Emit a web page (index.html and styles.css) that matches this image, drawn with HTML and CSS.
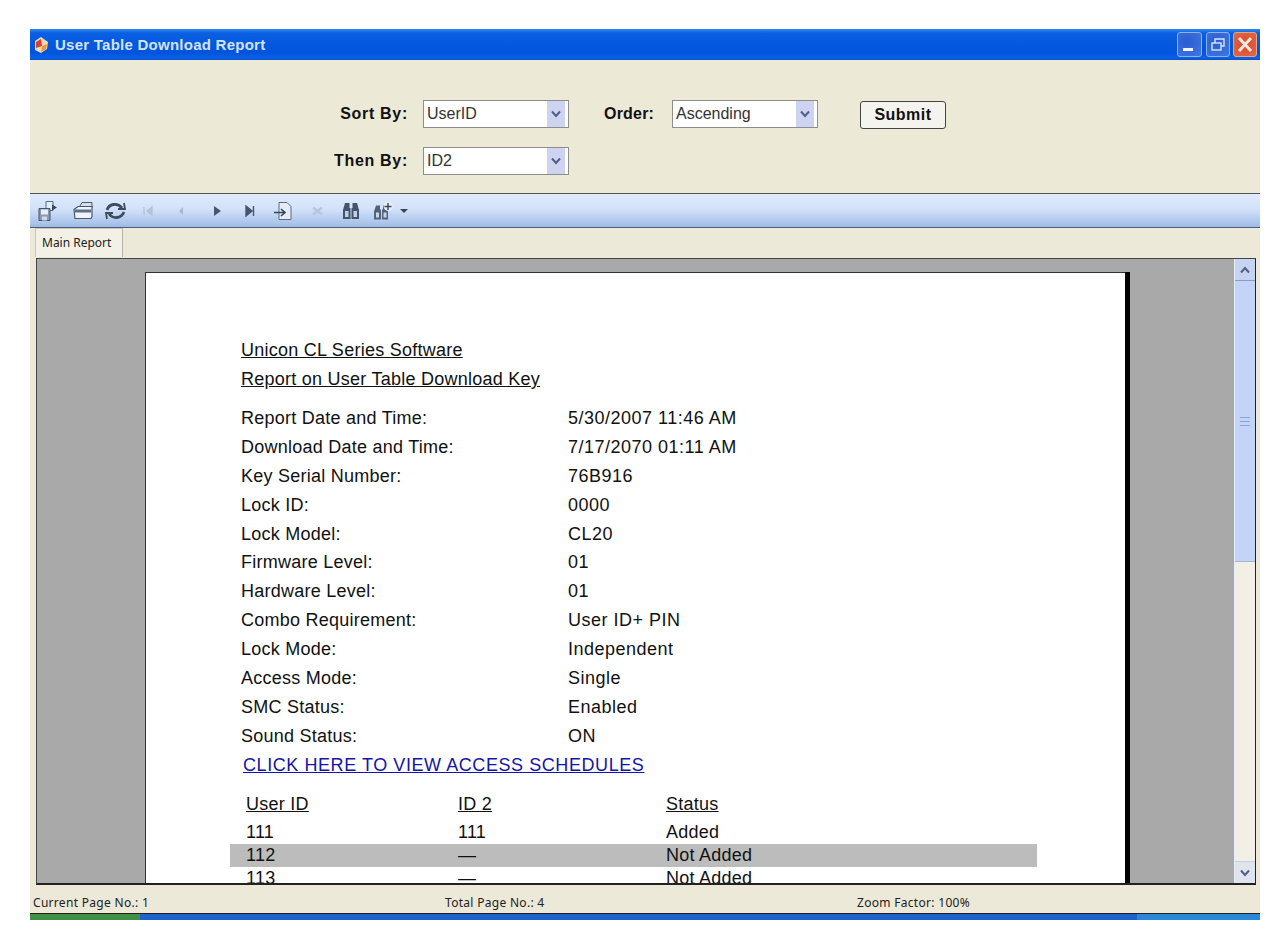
FILE: index.html
```html
<!DOCTYPE html>
<html lang="en">
<head>
  <meta charset="UTF-8">
  <title>User Table Download Report</title>
  <link rel="stylesheet" href="styles.css">
</head>
<body>
  <div class="window">
    <div class="title-bar">
      <svg class="app-icon" width="16" height="18" viewBox="0 0 16 18">
        <path d="M2 5 L8 1 L15 6 L14 13 L8 17 L2 14 Z" fill="#f3d9b8"/>
        <path d="M3 6 L8 3 L9 10 L3 12 Z" fill="#d6412a"/>
        <path d="M9 10 L14 8 L13 13 L8 16 Z" fill="#e79a3a"/>
      </svg>
      <span class="title-text">User Table Download Report</span>
      <div class="window-buttons">
        <div class="win-btn minimize">
          <svg width="25" height="25" viewBox="0 0 25 25"><rect x="6" y="16" width="10" height="3" fill="#f2f5fc"/></svg>
        </div>
        <div class="win-btn">
          <svg width="24" height="25" viewBox="0 0 24 25" fill="none" stroke="#dbe6fa" stroke-width="1.4"><rect x="6" y="11" width="9" height="7"/><path d="M9 11 V7 H18 V14 H15"/></svg>
        </div>
        <div class="win-btn close">
          <svg width="24" height="25" viewBox="0 0 24 25" fill="none" stroke="#fbe9df" stroke-width="3"><path d="M6 6 L18 19 M18 6 L6 19"/></svg>
        </div>
      </div>
    </div>

    <div class="sort-form">
      <div class="sort-row">
        <span class="sort-label">Sort By:</span>
        <div class="select-box"><span>UserID</span><i class="select-arrow"><svg width="10" height="8" viewBox="0 0 10 8" fill="none" stroke="#4f5f8a" stroke-width="2"><path d="M1 1.5 L5 6 L9 1.5"/></svg></i></div>
        <span class="order-label">Order:</span>
        <div class="select-box"><span>Ascending</span><i class="select-arrow"><svg width="10" height="8" viewBox="0 0 10 8" fill="none" stroke="#4f5f8a" stroke-width="2"><path d="M1 1.5 L5 6 L9 1.5"/></svg></i></div>
        <button class="submit-btn">Submit</button>
      </div>
      <div class="sort-row">
        <span class="sort-label">Then By:</span>
        <div class="select-box"><span>ID2</span><i class="select-arrow"><svg width="10" height="8" viewBox="0 0 10 8" fill="none" stroke="#4f5f8a" stroke-width="2"><path d="M1 1.5 L5 6 L9 1.5"/></svg></i></div>
      </div>
    </div>

    <div class="toolbar">
      <svg class="tool" style="left:8px" width="20" height="21" viewBox="0 0 20 21"><path d="M8 1 H15 V10 H8 Z" fill="#e4ecf8" stroke="#5a6a80"/><path d="M1 8 H12 V20 H1 Z" fill="#8a9ab0" stroke="#46546a"/><rect x="3" y="9" width="7" height="5" fill="#e8eef8"/><rect x="4" y="16" width="5" height="4" fill="#d0dae8"/><path d="M14 4 L19 7 L14 10 Z" fill="#36465a"/></svg>
      <svg class="tool" style="left:43px" width="20" height="19" viewBox="0 0 20 19"><path d="M6 6 L9 1 H19 V6" fill="#d4dfee" stroke="#4a5a70"/><path d="M1 8 L5 5 H19 V15 L18 17 H2 Z" fill="#f0f4fa" stroke="#46566c" stroke-width="1.2"/><rect x="2" y="8" width="16" height="3" fill="#5d7088"/></svg>
      <svg class="tool" style="left:75px" width="21" height="20" viewBox="0 0 21 20" fill="none" stroke="#3c4c5e" stroke-width="2.8"><path d="M2 9 C4 3 12 1 17 7"/><path d="M19 11 C16 18 8 18 4 13"/><path d="M13 8 L20 8 L19 2" stroke-width="1.8"/><path d="M8 12 L1 12 L2 18" stroke-width="1.8"/></svg>
      <svg class="tool" style="left:113px" width="10" height="12" viewBox="0 0 10 12"><path d="M1 2 V10 M9 2 L4 6 L9 10 Z" fill="#b4c2d6" stroke="#b4c2d6" stroke-width="1.4"/></svg>
      <svg class="tool" style="left:148px" width="6" height="12" viewBox="0 0 6 12"><path d="M5 2 L1 6 L5 10 Z" fill="#aab8cc"/></svg>
      <svg class="tool" style="left:183px" width="9" height="12" viewBox="0 0 9 12"><path d="M1 1 L8 6 L1 11 Z" fill="#465670"/></svg>
      <svg class="tool" style="left:215px" width="10" height="12" viewBox="0 0 10 12"><path d="M1 1 L7 6 L1 11 Z M8.5 1 V11" fill="#465670" stroke="#465670" stroke-width="1.4"/></svg>
      <svg class="tool" style="left:243px" width="20" height="19" viewBox="0 0 20 19"><path d="M6 1 H14 L18 5 V18 H6 Z" fill="#e4ecf8" stroke="#5a6a80"/><path d="M1 11 H12 M8 7.5 L12 11 L8 14.5" fill="none" stroke="#36465a" stroke-width="1.6"/></svg>
      <svg class="tool" style="left:282px" width="11" height="9" viewBox="0 0 11 9"><path d="M1 1 L10 8 M10 1 L1 8" stroke="#b6c6dc" stroke-width="2.4"/></svg>
      <svg class="tool" style="left:312px" width="18" height="18" viewBox="0 0 18 18"><path d="M3 1 H7.5 V6 H8.5 V17 H1 V8 Z M10.5 1 H15 L17 8 V17 H9.5 V6 H10.5 Z" fill="#44546c"/><rect x="3" y="9" width="3.5" height="6" fill="#c0d0e6"/><rect x="11.5" y="9" width="3.5" height="6" fill="#c0d0e6"/></svg>
      <svg class="tool" style="left:343px" width="20" height="19" viewBox="0 0 20 19"><path d="M3 4 H7 V8 H8 V18 H1 V10 Z M10 4 H13 L15 10 V18 H9 V8 H10 Z" fill="#52627a"/><rect x="3" y="11" width="3" height="5" fill="#c8d6ea"/><rect x="10.5" y="11" width="3" height="5" fill="#c8d6ea"/><circle cx="15" cy="5" r="4.4" fill="#e8eff9"/><path d="M15 1.5 V8.5 M11.5 5 H18.5" stroke="#36465a" stroke-width="1.4"/></svg>
      <svg class="tool" style="left:370px" width="8" height="4" viewBox="0 0 8 4"><path d="M0 0 H8 L4 4 Z" fill="#36465a"/></svg>
    </div>

    <div class="tab-row">
      <div class="tab">Main Report</div>
    </div>

    <div class="viewer">
      <div class="report-scroll">
        <div class="report-page">
          <div class="report-head"><u>Unicon CL Series Software</u></div>
          <div class="report-head second"><u>Report on User Table Download Key</u></div>
          <div class="report-fields">
            <div class="field"><span>Report Date and Time:</span><span>5/30/2007 11:46 AM</span></div>
            <div class="field"><span>Download Date and Time:</span><span>7/17/2070 01:11 AM</span></div>
            <div class="field"><span>Key Serial Number:</span><span>76B916</span></div>
            <div class="field"><span>Lock ID:</span><span>0000</span></div>
            <div class="field"><span>Lock Model:</span><span>CL20</span></div>
            <div class="field"><span>Firmware Level:</span><span>01</span></div>
            <div class="field"><span>Hardware Level:</span><span>01</span></div>
            <div class="field"><span>Combo Requirement:</span><span>User ID+ PIN</span></div>
            <div class="field"><span>Lock Mode:</span><span>Independent</span></div>
            <div class="field"><span>Access Mode:</span><span>Single</span></div>
            <div class="field"><span>SMC Status:</span><span>Enabled</span></div>
            <div class="field"><span>Sound Status:</span><span>ON</span></div>
          </div>
          <a class="schedule-link" href="#">CLICK HERE TO VIEW ACCESS SCHEDULES</a>
          <div class="user-row user-head"><span><u>User ID</u></span><span><u>ID 2</u></span><span><u>Status</u></span></div>
          <div class="user-row"><span>111</span><span>111</span><span>Added</span></div>
          <div class="user-row shaded"><span>112</span><span>&mdash;</span><span>Not Added</span></div>
          <div class="user-row"><span>113</span><span>&mdash;</span><span>Not Added</span></div>
        </div>
      </div>
      <div class="scrollbar">
        <div class="scroll-btn"><svg width="10" height="8" viewBox="0 0 10 8" fill="none" stroke="#4f5f8a" stroke-width="2"><path d="M1 6.5 L5 2 L9 6.5"/></svg></div>
        <div class="scroll-thumb"><span class="grip"></span></div>
        <div class="scroll-track"></div>
        <div class="scroll-btn bottom"><svg width="10" height="8" viewBox="0 0 10 8" fill="none" stroke="#4f5f8a" stroke-width="2"><path d="M1 1.5 L5 6 L9 1.5"/></svg></div>
      </div>
    </div>

    <div class="status-bar">
      <span class="status-current">Current Page No.: 1</span>
      <span class="status-total">Total Page No.: 4</span>
      <span class="status-zoom">Zoom Factor: 100%</span>
    </div>
    <div class="task-strip"><div class="task-start"></div></div>
  </div>
</body>
</html>
```

FILE: styles.css
```css
body {
  margin: 0;
  background: #fff;
  font-family: "Liberation Sans", Arial, sans-serif;
  color: #111;
}

.window {
  width: 1230px;
  height: 891px;
  margin: 29px 0 0 30px;
  display: flex;
  flex-direction: column;
  background: #ece9d8;
}

.title-bar {
  height: 31px;
  display: flex;
  align-items: center;
  background: linear-gradient(#2f8cf0 0, #0a5fe2 4px, #0054dc 24px, #0a62e8 29px, #0a4fc0 31px);
}

.app-icon {
  margin-left: 3px;
}

.title-text {
  margin-left: 6px;
  font-weight: bold;
  font-size: 15px;
  letter-spacing: 0.25px;
  color: #d5e2f8;
}

.window-buttons {
  margin-left: auto;
  margin-right: 3px;
  display: flex;
  gap: 3px;
}

.win-btn {
  width: 24px;
  height: 25px;
  border: 1px solid #8fb0ea;
  border-radius: 3px;
  box-sizing: border-box;
  background: radial-gradient(circle at 40% 40%, #2a5cd0, #3f78e0);
  overflow: hidden;
}

.win-btn svg {
  display: block;
  margin: -1px;
}

.win-btn.minimize {
  width: 25px;
  margin-right: 1px;
}

.win-btn.close {
  background: radial-gradient(circle at 50% 50%, #d9482a, #df6a48);
  border-color: #dfa78f;
}

.sort-form {
  height: 134px;
  box-sizing: border-box;
  padding-top: 40px;
  border-bottom: 1px solid #555;
  background: #ede9d7;
}

.sort-row {
  height: 28px;
  margin-bottom: 19px;
  display: flex;
  align-items: center;
}

.sort-label {
  width: 378px;
  text-align: right;
  font-weight: bold;
  font-size: 16px;
  letter-spacing: 0.7px;
  white-space: nowrap;
}

.select-box {
  width: 146px;
  height: 28px;
  margin-left: 15px;
  box-sizing: border-box;
  padding: 0 3px;
  display: flex;
  align-items: center;
  justify-content: space-between;
  background: #fff;
  border: 1px solid #8d8d8d;
  font-size: 16px;
  color: #333;
}

.select-arrow {
  width: 18px;
  height: 26px;
  display: flex;
  align-items: center;
  justify-content: center;
  background: #cdd3f0;
}

.order-label {
  width: 53px;
  margin-left: 35px;
  font-weight: bold;
  font-size: 16px;
  letter-spacing: 0.2px;
}

.submit-btn {
  width: 86px;
  height: 28px;
  margin-left: 42px;
  margin-top: 2px;
  padding: 0;
  background: #f4f3ee;
  border: 1px solid #444;
  border-radius: 3px;
  font-family: "Liberation Sans", sans-serif;
  font-weight: bold;
  font-size: 16px;
  letter-spacing: 0.5px;
  color: #111;
}

.toolbar {
  position: relative;
  height: 34px;
  box-sizing: border-box;
  border-bottom: 1px solid #4c5f78;
  background: linear-gradient(#dfeafc 0, #d3e2f9 45%, #a9c3ea 90%, #9db9e4 100%);
}

.tool {
  position: absolute;
  top: 50%;
  transform: translateY(-50%);
}

.tab-row {
  height: 30px;
  box-sizing: border-box;
  padding-left: 5px;
  background: #ece9d8;
}

.tab {
  width: 88px;
  height: 29px;
  box-sizing: border-box;
  padding: 5px 0 0 6px;
  background: #f3f1e6;
  border-right: 1px solid #b5b3a6;
  border-left: 1px solid #c8c6b8;
  border-top: 1px solid #c8c6b8;
  font-family: "Noto Sans", sans-serif;
  font-size: 12px;
  color: #222;
}

.viewer {
  height: 627px;
  margin: 0 4px 5px 6px;
  display: flex;
  box-sizing: border-box;
  border-top: 1px solid #444;
  border-bottom: 2px solid #222;
  border-left: 1px solid #444;
  border-right: 1px solid #222;
}

.report-scroll {
  flex: 1;
  overflow: hidden;
  background: #a9a9a9;
  padding: 13px 0 0 108px;
}

.report-page {
  width: 980px;
  height: 900px;
  box-sizing: border-box;
  padding: 63px 0 0 95px;
  background: #fff;
  border-top: 1px solid #333;
  border-left: 1px solid #333;
  box-shadow: 5px 0 0 #000;
  font-size: 18px;
  letter-spacing: 0.25px;
}

.report-head {
  height: 29px;
  line-height: 29px;
}

.report-head.second {
  margin-bottom: 10px;
}

.field {
  height: 28.9px;
  line-height: 29px;
  display: grid;
  grid-template-columns: 327px 1fr;
}

.field span:last-child {
  letter-spacing: 0.5px;
}

.schedule-link {
  display: block;
  height: 29px;
  line-height: 29px;
  margin-left: 2px;
  letter-spacing: 0.57px;
  color: #1414a8;
}

.user-row {
  height: 23px;
  line-height: 23px;
  width: 791px;
  margin-left: -11px;
  padding-left: 16px;
  display: grid;
  grid-template-columns: 212px 208px 1fr;
}

.user-head {
  height: 28px;
  line-height: 28px;
  margin-top: 10px;
  margin-bottom: 3px;
}

.shaded {
  background: #bcbcbc;
}

.scrollbar {
  width: 20px;
  display: flex;
  flex-direction: column;
  background: #f1efe6;
  border-left: 1px solid #e8eef8;
}

.scroll-btn {
  height: 21px;
  flex: none;
  display: flex;
  align-items: center;
  justify-content: center;
  background: #c6d4f2;
  border-bottom: 1px solid #8c9bb8;
}

.scroll-btn.bottom {
  background: #e0e4ee;
  border-top: 1px solid #c8cede;
  border-bottom: none;
}

.scroll-thumb {
  height: 280px;
  flex: none;
  display: flex;
  align-items: center;
  justify-content: center;
  background: #c2d4f8;
  border-bottom: 1px solid #a8b4cc;
}

.grip {
  width: 10px;
  height: 7px;
  border-top: 1px solid #8ea4cc;
  border-bottom: 1px solid #8ea4cc;
  background: linear-gradient(transparent 3px, #8ea4cc 3px, #8ea4cc 4px, transparent 4px);
}

.scroll-track {
  flex: 1;
}

.status-bar {
  height: 24px;
  font-family: "Noto Sans", sans-serif;
  font-size: 12px;
  letter-spacing: 0.3px;
  line-height: 26px;
  color: #222;
  display: grid;
  grid-template-columns: 412px 412px 1fr;
  padding-left: 3px;
  border-bottom: 1px solid #222;
  box-sizing: border-box;
}

.task-strip {
  height: 6px;
  background: linear-gradient(90deg, #1f62cc 0, #1f62cc 90%, #2c86d8 90%);
}

.task-start {
  width: 110px;
  height: 6px;
  background: #3f8f45;
}
```
